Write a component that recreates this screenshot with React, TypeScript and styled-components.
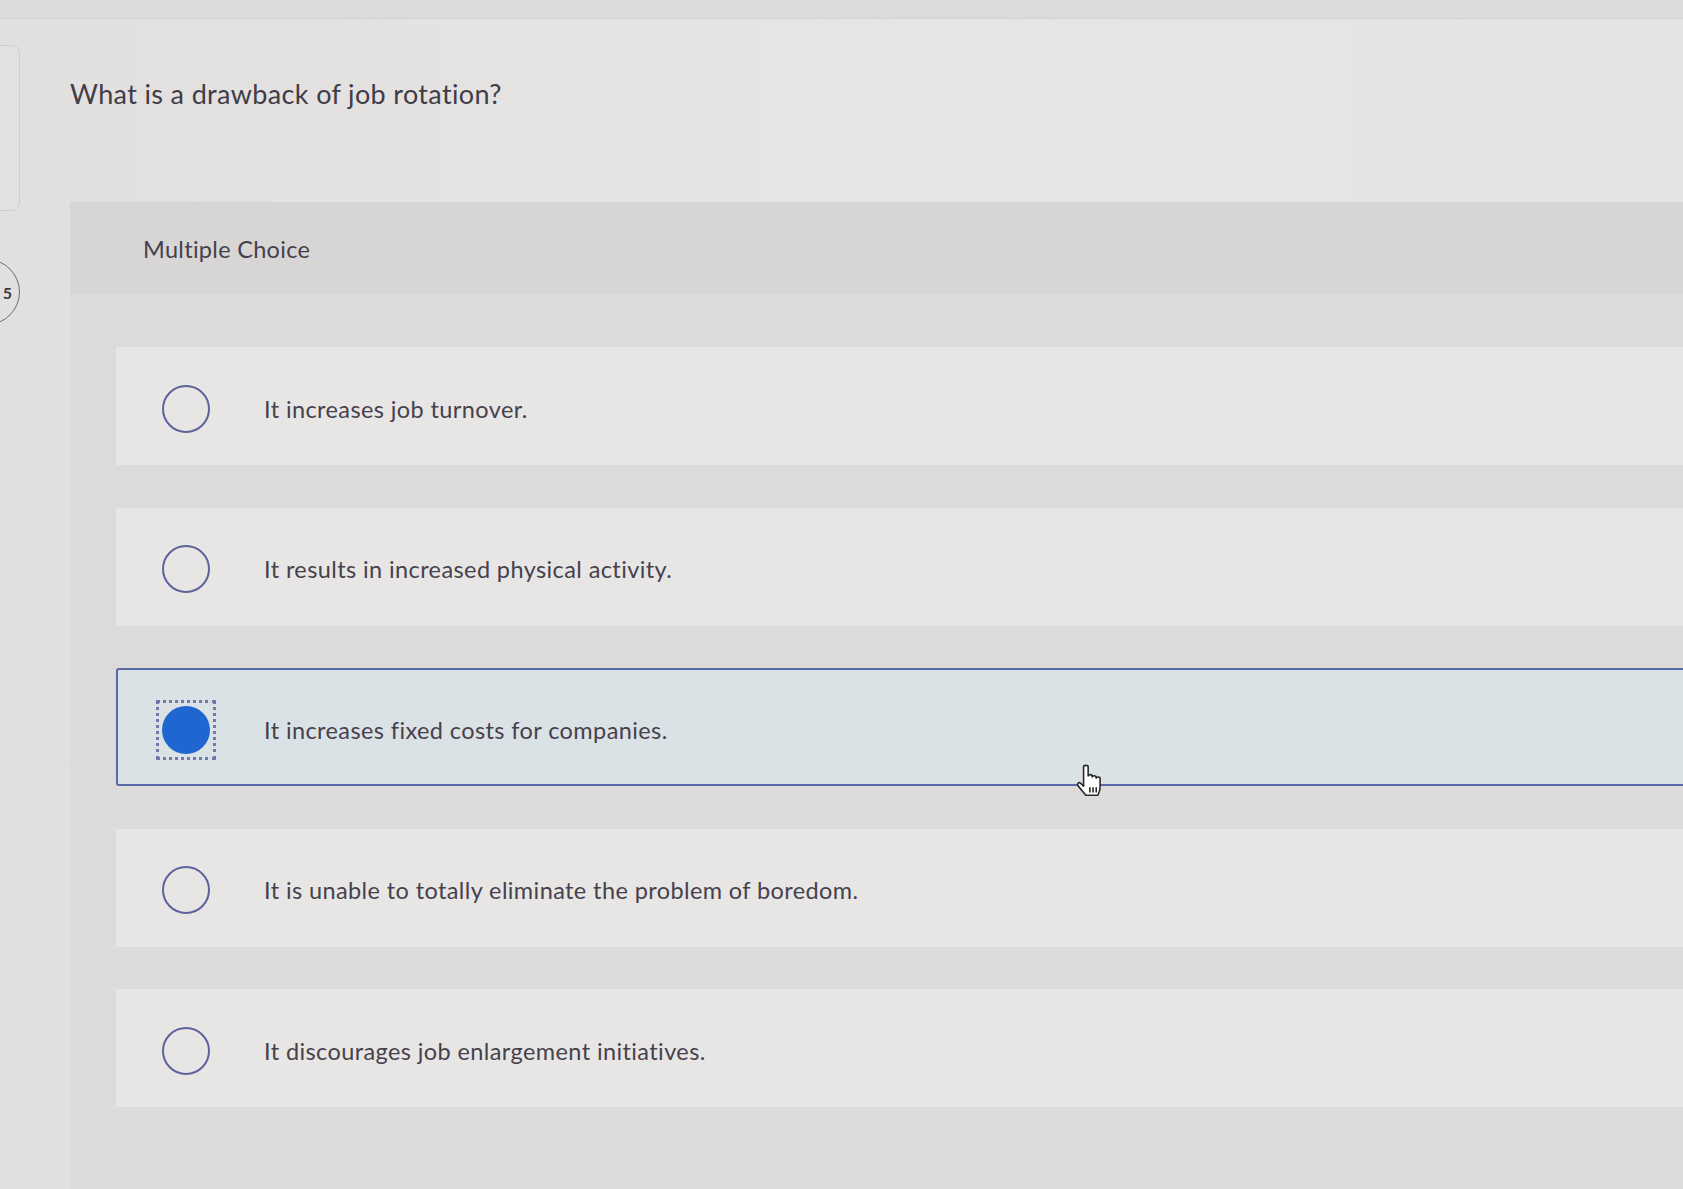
import React from "react";
import styled, { createGlobalStyle } from "styled-components";

const Global = createGlobalStyle`
  html, body { margin: 0; padding: 0; }
  body {
    background: #e3e2e0;
    font-family: "Lato", "Open Sans", "Liberation Sans", sans-serif;
    color: #45404c;
    overflow: hidden;
  }
`;

const Page = styled.div`
  position: relative;
  width: 1683px;
  height: 1189px;
  overflow: hidden;
  background: linear-gradient(90deg, #e1e0de 0%, #e7e6e4 55%, #e5e4e2 100%);
`;

const TopStrip = styled.div`
  height: 18px;
  background: #dddcda;
  border-bottom: 1px solid #d2d1cf;
`;

const Shell = styled.div`
  display: grid;
  grid-template-columns: 20px 1fr;
  column-gap: 50px;
`;

const Rail = styled.div`
  display: flex;
  flex-direction: column;
  align-items: flex-end;
  padding-top: 26px;
  gap: 48px;
`;

const RailCard = styled.div`
  width: 40px;
  height: 164px;
  border: 1.5px solid #cfcecc;
  border-radius: 8px;
  background: #e2e1df;
  flex-shrink: 0;
`;

const RailBadge = styled.div`
  width: 66px;
  height: 66px;
  border: 1.5px solid #6e6a74;
  border-radius: 50%;
  display: flex;
  align-items: center;
  justify-content: flex-end;
  padding-right: 7px;
  box-sizing: border-box;
  font-size: 16px;
  font-weight: 700;
  color: #3e3a44;
  flex-shrink: 0;
`;

const Content = styled.div`
  display: flex;
  flex-direction: column;
  margin-right: -60px;
`;

const Title = styled.h1`
  margin: 58px 0 0;
  font-size: 27px;
  line-height: 34px;
  font-weight: 400;
  color: #413c48;
  letter-spacing: 0.35px;
`;

const Panel = styled.section`
  margin-top: 91px;
  background: #dcdbd9;
  min-height: 1000px;
  display: flex;
  flex-direction: column;
`;

const PanelHeader = styled.div`
  height: 92px;
  background: #d7d6d4;
  display: flex;
  align-items: center;
  padding-left: 73px;
  padding-top: 2px;
  box-sizing: border-box;
  font-size: 23.5px;
  letter-spacing: 0.3px;
  color: #45404c;
`;

const Options = styled.div`
  display: flex;
  flex-direction: column;
  gap: 42.5px;
  padding: 53px 0 0 46px;
`;

const Option = styled.label<{ $selected?: boolean }>`
  height: 118px;
  box-sizing: border-box;
  display: flex;
  align-items: center;
  padding-left: ${(p) => (p.$selected ? "44px" : "46px")};
  padding-top: 5px;
  background: ${(p) => (p.$selected ? "#dbe2e6" : "#e7e6e4")};
  border: ${(p) => (p.$selected ? "2px solid #5a68a6" : "none")};
  border-right: none;
  border-radius: ${(p) => (p.$selected ? "3px 0 0 3px" : "0")};
  cursor: pointer;
`;

const RadioSlot = styled.span<{ $focused?: boolean }>`
  width: 60px;
  height: 60px;
  margin-left: -6px;
  box-sizing: border-box;
  flex-shrink: 0;
  display: flex;
  align-items: center;
  justify-content: center;
  border: 3px ${(p) => (p.$focused ? "dotted #7479ad" : "solid transparent")};
`;

const Radio = styled.span<{ $selected?: boolean }>`
  width: 48px;
  height: 48px;
  border-radius: 50%;
  box-sizing: border-box;
  flex-shrink: 0;
  border: ${(p) => (p.$selected ? "none" : "2px solid #5d629c")};
  background: ${(p) => (p.$selected ? "#1f66d1" : "transparent")};
`;

const OptionText = styled.span`
  margin-left: 48px;
  font-size: 23.5px;
  color: #46414d;
  letter-spacing: 0.4px;
`;

const Cursor = styled.div`
  position: absolute;
  left: 1075px;
  top: 764px;
  width: 28px;
  height: 33px;
  pointer-events: none;
`;

const options = [
  "It increases job turnover.",
  "It results in increased physical activity.",
  "It increases fixed costs for companies.",
  "It is unable to totally eliminate the problem of boredom.",
  "It discourages job enlargement initiatives.",
];

export default function App() {
  return (
    <>
      <Global />
      <Page>
        <TopStrip />
        <Shell>
          <Rail>
            <RailCard />
            <RailBadge>5</RailBadge>
          </Rail>
          <Content>
            <Title>What is a drawback of job rotation?</Title>
            <Panel>
              <PanelHeader>Multiple Choice</PanelHeader>
              <Options>
                {options.map((o, i) => (
                  <Option key={o} $selected={i === 2}>
                    <RadioSlot $focused={i === 2}>
                      <Radio $selected={i === 2} />
                    </RadioSlot>
                    <OptionText>{o}</OptionText>
                  </Option>
                ))}
              </Options>
            </Panel>
          </Content>
        </Shell>
        <Cursor>
          <svg viewBox="1.5 0.5 22.5 29" width="28" height="33">
            <path
              d="M8 3C8 1.3 12 1.3 12 3L12 11C12 9.5 15.5 9.5 15.5 11L15.5 12C15.5 10.5 19 10.5 19 12L19 13C19 11.5 22.5 11.5 22.5 13L22.5 21C22.5 24 21.5 26 20.5 28L10 28L3 19.5C2 18 3.5 16 5.5 17.5L8 20Z"
              fill="#ffffff"
              stroke="#2a2a2a"
              strokeWidth="1.4"
              strokeLinejoin="round"
            />
            <path d="M13.5 21v4.5M16.3 21v4.5M19.1 21v4.5" stroke="#2a2a2a" strokeWidth="1.4" />
          </svg>
        </Cursor>
      </Page>
    </>
  );
}
